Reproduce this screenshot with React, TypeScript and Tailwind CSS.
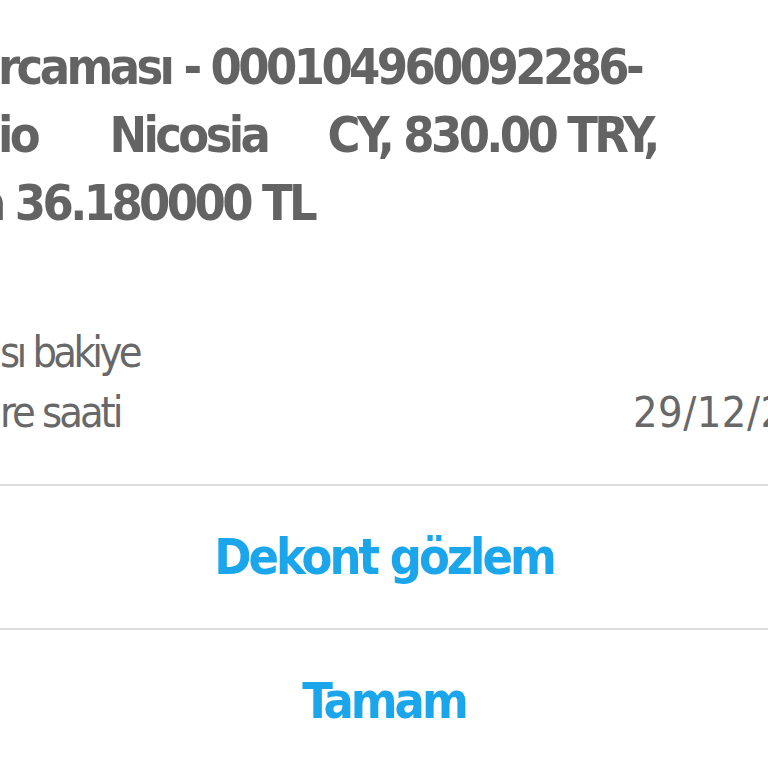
export default function App() {
  const font = { fontFamily: '"Liberation Sans Narrow", "DejaVu Sans Condensed", Roboto, sans-serif' };

  return (
    <div className="w-[768px] h-[768px] overflow-hidden bg-white" style={font}>
      <div className="pt-[33px] text-[50px] leading-[68px] font-bold text-[#636363] tracking-[-3.6px] whitespace-pre">
        <div className="ml-[-2px]">rcaması - 000104960092286-</div>
        <div className="ml-[-2px]">io      Nicosia     CY, 830.00 TRY,</div>
        <div className="ml-[-24px]">a 36.180000 TL</div>
      </div>

      <div className="mt-[85px] text-[43px] leading-[60px] text-[#686868] tracking-[-3px]">
        <div className="flex whitespace-nowrap">
          <span className="w-[633px] shrink-0 tracking-[-3.6px]">sı bakiye</span>
        </div>
        <div className="flex whitespace-nowrap">
          <span className="w-[633px] shrink-0">re saati</span>
          <span className="tracking-[0.5px]">29/12/2024</span>
        </div>
      </div>

      <div className="mt-[42px] border-t-2 border-[#dcdcdc]">
        <button className="w-full h-[142px] flex items-center justify-center text-[50px] font-bold text-[#1ba6ec] tracking-[-3px]">
          Dekont gözlem
        </button>
      </div>
      <div className="border-t-2 border-[#dcdcdc]">
        <button className="w-full h-[142px] flex items-center justify-center text-[50px] font-bold text-[#1ba6ec] tracking-[-3px]">
          Tamam
        </button>
      </div>
    </div>
  );
}
